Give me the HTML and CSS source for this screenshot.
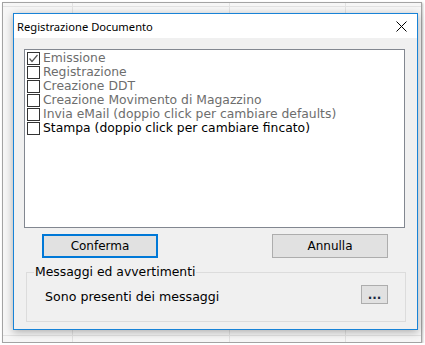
FILE: index.html
```html
<!DOCTYPE html>
<html lang="it">
<head>
    <meta charset="UTF-8">
    <title>Registrazione Documento</title>
    <link rel="stylesheet" href="styles.css">
</head>
<body>
    <div class="screen">
        <!-- Dialog window -->
        <div class="dialog">
            <div class="titlebar">
                <span class="title">Registrazione Documento</span>
                <svg class="close" width="11" height="11" viewBox="0 0 11 11">
                    <path d="M0.5 0.5 L10.5 10.5 M10.5 0.5 L0.5 10.5" stroke="#000" stroke-width="1" fill="none"/>
                </svg>
            </div>

            <div class="client">
                <div class="listbox">
                    <div class="item muted"><span class="check checked"><svg width="11" height="11" viewBox="0 0 11 11"><path d="M1.5 5.5 L4 8.5 L9.5 2" stroke="#555" stroke-width="1.2" fill="none"/></svg></span>Emissione</div>
                    <div class="item muted"><span class="check"></span>Registrazione</div>
                    <div class="item muted"><span class="check"></span>Creazione DDT</div>
                    <div class="item muted"><span class="check"></span>Creazione Movimento di Magazzino</div>
                    <div class="item muted"><span class="check"></span>Invia eMail (doppio click per cambiare defaults)</div>
                    <div class="item"><span class="check"></span>Stampa (doppio click per cambiare fincato)</div>
                </div>

                <div class="actions">
                    <button class="btn default">Conferma</button>
                    <button class="btn">Annulla</button>
                </div>

                <fieldset class="group">
                    <legend>Messaggi ed avvertimenti</legend>
                    <div class="message">
                        <span>Sono presenti dei messaggi</span>
                        <button class="btn small">...</button>
                    </div>
                </fieldset>
            </div>
        </div>
    </div>
</body>
</html>
```

FILE: styles.css
```css
* {
    margin: 0;
    padding: 0;
    box-sizing: border-box;
}
body {
    background: #fff;
    font-family: 'DejaVu Sans', sans-serif;
    font-size: 12px;
    color: #000;
}

/* Screenshot frame with the sheet behind */
.screen {
    width: 420px;
    height: 341px;
    margin: 2px 0 0 2px;
    border: 1px solid #a3a3a3;
    background-color: #f6f6f6;
    background-image:
        linear-gradient(to right, transparent 69px, #e2e2e2 69px, #e2e2e2 70px, transparent 70px),
        linear-gradient(to right, transparent 226px, #e2e2e2 226px, #e2e2e2 227px, transparent 227px),
        linear-gradient(to right, transparent 342px, #e2e2e2 342px, #e2e2e2 343px, transparent 343px),
        linear-gradient(to bottom, transparent 3px, #e2e2e2 3px, #e2e2e2 4px, transparent 4px),
        linear-gradient(to bottom, transparent 332px, #e2e2e2 332px, #e2e2e2 333px, transparent 333px);
    box-shadow: 1px 1px 2px rgba(0, 0, 0, 0.25);
    padding: 10px 0 0 10px;
}

/* Dialog */
.dialog {
    width: 405px;
    height: 317px;
    border: 1px solid #1883d7;
    background: #f0f0f0;
    box-shadow: 0 2px 8px rgba(0, 0, 0, 0.3);
    display: flex;
    flex-direction: column;
}
.titlebar {
    height: 24px;
    background: #fff;
    display: flex;
    align-items: center;
    justify-content: space-between;
    padding: 0 10px 0 3px;
}
.title {
    font-family: 'Noto Sans', sans-serif;
    font-size: 11.2px;
}
.close {
    display: block;
    margin-top: 1px;
}

.client {
    flex: 1;
    padding: 11px 12px 0 10px;
}

/* List with checkboxes */
.listbox {
    height: 179px;
    border: 1px solid #828790;
    background: #fff;
    padding: 1px 2px;
    font-size: 12.35px;
}
.item {
    height: 14px;
    display: flex;
    align-items: center;
    line-height: 14px;
    white-space: nowrap;
}
.item.muted {
    color: #6d6d6d;
}
.check {
    flex: none;
    width: 13px;
    height: 13px;
    border: 1px solid #333;
    background: #fff;
    margin-right: 3px;
    display: flex;
    align-items: center;
    justify-content: center;
}

/* Buttons */
.actions {
    display: flex;
    justify-content: space-between;
    padding: 0 17px 0 18px;
    margin-top: 6px;
}
.btn {
    width: 116px;
    height: 24px;
    background: #e1e1e1;
    border: 1px solid #adadad;
    font-family: 'DejaVu Sans', sans-serif;
    font-size: 12px;
    color: #000;
}
.btn.default {
    border: 2px solid #0078d7;
}
.btn.small {
    width: 27px;
    height: 19px;
    font-weight: bold;
    line-height: 10px;
    color: #1a2a40;
}

/* Group box */
.group {
    height: 57px;
    margin: 7px 0 0 2px;
    width: 380px;
    border: 1px solid #dcdcdc;
    padding: 0;
    font-size: 12.4px;
}
.group legend {
    margin-left: 7px;
    padding: 0 1px;
    line-height: 14px;
}
.message {
    display: flex;
    align-items: center;
    justify-content: space-between;
    padding: 0 17px 0 18px;
    margin-top: 6px;
}
.message span {
    padding-top: 3px;
    font-size: 12.6px;
}
```
